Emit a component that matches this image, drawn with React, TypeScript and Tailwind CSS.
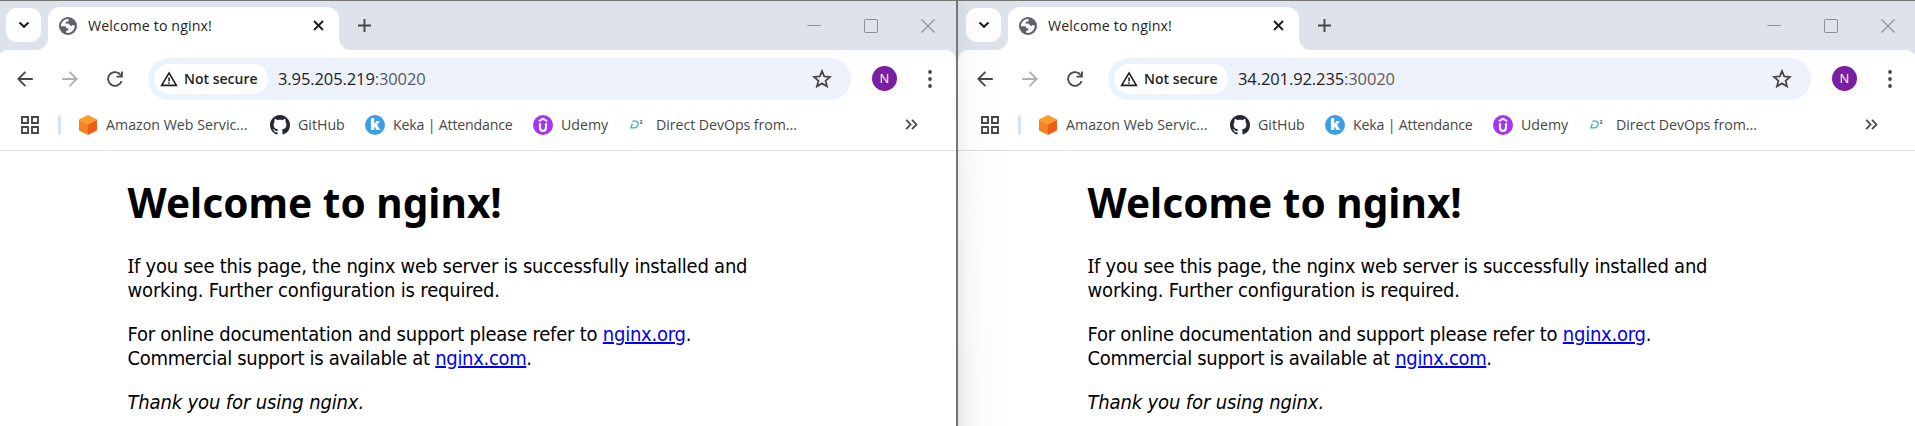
import type { ReactNode } from "react";

const UI = "font-['Open_Sans',sans-serif]";

function GlobeIcon() {
  return (
    <svg width="18" height="18" viewBox="0 0 18 18">
      <circle cx="9" cy="9" r="9" fill="#5f6368" />
      <path
        d="M2 9.2 C2 5.6 4.6 2.4 8.6 2 L9.8 2.6 L9.2 4.2 L6.8 5 L6.6 6.4 L8 6.8 L9.8 6.6 L11 8.4 L12.6 9 L13.4 8 L15.8 8.6 C15.9 12 13.4 15.4 9.6 16 L7 15.6 L7.2 14 L9.2 13.2 L9.4 11.6 L7.4 11 L6.4 9.2 Z"
        fill="#fff"
      />
    </svg>
  );
}

function AwsIcon() {
  return (
    <svg width="20" height="20" viewBox="0 0 20 20">
      <path d="M10 0 L19 4.6 L10 9.4 L1 4.6 Z" fill="#ff9a2b" />
      <path d="M1 4.6 L10 9.4 V20 L1 15.4 Z" fill="#f8811f" />
      <path d="M19 4.6 L10 9.4 V20 L19 15.4 Z" fill="#ec5d1e" />
    </svg>
  );
}

function GitHubIcon() {
  return (
    <svg width="20" height="20" viewBox="0 0 16 16" fill="#24292f">
      <path d="M8 0C3.58 0 0 3.58 0 8c0 3.54 2.29 6.53 5.47 7.59.4.07.55-.17.55-.38 0-.19-.01-.82-.01-1.49-2.01.37-2.53-.49-2.69-.94-.09-.23-.48-.94-.82-1.13-.28-.15-.68-.52-.01-.53.63-.01 1.08.58 1.23.82.72 1.21 1.87.87 2.33.66.07-.52.28-.87.51-1.07-1.78-.2-3.64-.89-3.64-3.95 0-.87.31-1.59.82-2.15-.08-.2-.36-1.02.08-2.12 0 0 .67-.21 2.2.82.64-.18 1.32-.27 2-.27s1.36.09 2 .27c1.53-1.04 2.2-.82 2.2-.82.44 1.1.16 1.92.08 2.12.51.56.82 1.27.82 2.15 0 3.07-1.87 3.75-3.65 3.95.29.25.54.73.54 1.48 0 1.07-.01 1.93-.01 2.2 0 .21.15.46.55.38A8.01 8.01 0 0 0 16 8c0-4.42-3.58-8-8-8z" />
    </svg>
  );
}

function KekaIcon() {
  return (
    <span className="flex size-5 items-center justify-center rounded-full bg-[#3b9fe6] pb-px font-['Open_Sans',sans-serif] text-[15px] leading-none font-extrabold text-white">
      k
    </span>
  );
}

function UdemyIcon() {
  return (
    <svg width="20" height="20" viewBox="0 0 20 20" fill="none" stroke="#fff">
      <circle cx="10" cy="10" r="10" fill="#a435f0" stroke="none" />
      <path d="M5.8 6.2 L10 3.6 L14.2 6.2" strokeWidth="1.9" />
      <path d="M7 8 V12.6 C7 17.2 13 17.2 13 12.6 V8" strokeWidth="2.1" />
    </svg>
  );
}

function DevOpsIcon() {
  return (
    <svg width="20" height="20" viewBox="0 0 20 20" fill="none">
      <path d="M4.4 6.2 H7.6 C12 6.4 10.4 12.8 5.6 12.8 H3 L4.3 8.6" stroke="#29abe2" strokeWidth="1.3" />
      <path d="M11.8 6 C12 5 14.2 5 14.1 6.2 C14 7 12.8 7.4 12 8.2 H14.6" stroke="#555" strokeWidth="0.9" />
    </svg>
  );
}

function Bookmark({ icon, children, textClass }: { icon: ReactNode; children: ReactNode; textClass: string }) {
  return (
    <div className="flex shrink-0 items-center gap-[8px]">
      {icon}
      <span className={`whitespace-nowrap text-[14.2px] leading-5 text-[#474747] ${textClass}`}>{children}</span>
    </div>
  );
}

function TabStrip() {
  return (
    <div className="flex h-[50px] items-start border-t border-[#757575] bg-[#dee2ea]">
      <div className="mt-[7px] ml-[8px] flex h-[34px] w-[35px] items-center justify-center rounded-[11px] bg-white">
        <svg width="12" height="8" viewBox="0 0 12 8" fill="none" stroke="#1f1f1f" strokeWidth="2.2">
          <path d="M1.5 1.5 L6 5.7 L10.5 1.5" />
        </svg>
      </div>
      <div className="-ml-[5px] h-3 w-3 self-end bg-[radial-gradient(circle_at_top_left,transparent_11.5px,white_12.5px)]" />
      <div className="mt-[6px] flex h-[43px] w-[291px] items-center rounded-t-[12px] bg-white pb-[6px] pl-[11px]">
        <GlobeIcon />
        <span className="ml-[11px] flex-1 whitespace-nowrap text-[14.2px] leading-5 tracking-[0.12px] text-[#1f1f1f]">
          Welcome to nginx!
        </span>
        <svg className="mr-[15px]" width="11" height="11" viewBox="0 0 11 11" stroke="#1f1f1f" strokeWidth="1.9">
          <path d="M1 1 L10 10 M10 1 L1 10" />
        </svg>
      </div>
      <div className="h-3 w-3 self-end bg-[radial-gradient(circle_at_top_right,transparent_11.5px,white_12.5px)]" />
      <svg className="mt-[18px] ml-[7px]" width="13" height="13" viewBox="0 0 13 13" stroke="#474747" strokeWidth="1.9">
        <path d="M6.5 0 V13 M0 6.5 H13" />
      </svg>
      <div className="mt-[18px] mr-[21px] ml-auto flex items-center gap-[43px]">
        <svg width="14" height="14" viewBox="0 0 14 14" stroke="#8c8f94">
          <path d="M0.5 6.5 H13.5" />
        </svg>
        <svg width="14" height="14" viewBox="0 0 14 14" fill="none" stroke="#8c8f94">
          <rect x="0.5" y="0.5" width="13" height="13" rx="0.8" />
        </svg>
        <svg width="14" height="14" viewBox="0 0 14 14" stroke="#8c8f94" strokeWidth="1.1">
          <path d="M0.5 0.5 L13.5 13.5 M13.5 0.5 L0.5 13.5" />
        </svg>
      </div>
    </div>
  );
}

function Toolbar({ host }: { host: string }) {
  return (
    <div className="flex h-[57px] items-center pl-[19px]">
      <svg width="16" height="16" viewBox="0 0 16 16" fill="none" stroke="#474747" strokeWidth="1.8">
        <path d="M15.8 8 H1.5 M8.4 0.8 L1.3 8 L8.4 15.2" />
      </svg>
      <svg className="ml-[29px]" width="16" height="16" viewBox="0 0 16 16" fill="none" stroke="#b0b0b0" strokeWidth="1.8">
        <path d="M0.2 8 H14.5 M7.6 0.8 L14.7 8 L7.6 15.2" />
      </svg>
      <svg className="ml-[29px]" width="16" height="16" viewBox="0 0 16 16" fill="none" stroke="#474747" strokeWidth="1.8">
        <path d="M13.8 4.2 A6.9 6.9 0 1 0 14.6 10 M14.9 0.6 V5.6 H9.6" />
      </svg>
      <div className="mt-px ml-[25px] flex h-[42px] w-[703px] items-center rounded-full bg-[#ecf1fa] pl-[6px]">
        <div className="flex h-[30px] w-[114px] items-center rounded-full bg-white pl-[6px]">
          <svg width="18" height="16" viewBox="0 0 18 16" fill="none" stroke="#1f1f1f" strokeWidth="1.6">
            <path d="M9 2 L16.4 14.4 H1.6 Z M9 6.6 V10.2 M9 11.2 V12.8" />
          </svg>
          <span className="ml-[6px] whitespace-nowrap text-[14px] leading-5 font-semibold text-[#1f1f1f]">Not secure</span>
        </div>
        <span className="ml-[10px] flex-1 whitespace-nowrap text-[16.5px] leading-5 tracking-[-0.1px] text-[#1f1f1f]">
          {host}
          <span className="text-[#5a5d61]">:30020</span>
        </span>
        <svg className="mr-[19px]" width="20" height="20" viewBox="0 0 20 20" fill="none" stroke="#474747" strokeWidth="1.8">
          <path d="M10 2.2 L12.2 7.4 L18 7.9 L13.6 11.7 L15 17.4 L10 14.4 L5 17.4 L6.4 11.7 L2 7.9 L7.8 7.4 Z" />
        </svg>
      </div>
      <div className="ml-[21px] flex size-[25px] items-center justify-center rounded-full bg-[#7b1fa2] text-[13px] leading-none text-white">
        N
      </div>
      <svg className="ml-[30.5px]" width="4" height="18" viewBox="0 0 4 18" fill="#474747">
        <circle cx="2" cy="2" r="1.9" />
        <circle cx="2" cy="9" r="1.9" />
        <circle cx="2" cy="16" r="1.9" />
      </svg>
    </div>
  );
}

function BookmarksBar() {
  return (
    <div className="flex h-[44px] items-center border-b border-[#dfdfdf] pb-[8px] pl-[23px]">
      <svg width="18" height="18" viewBox="0 0 18 18" fill="none" stroke="#474747" strokeWidth="1.9">
        <path d="M1 1 H7 V7 H1 Z M11 1 H17 V7 H11 Z M1 11 H7 V17 H1 Z M11 11 H17 V17 H11 Z" />
      </svg>
      <div className="mr-[17px] ml-[19px] h-5 w-[3px] rounded-full bg-[#d3e3fd]" />
      <div className="flex w-[192px]">
        <Bookmark icon={<AwsIcon />} textClass="tracking-[0.02px]">Amazon Web Servic...</Bookmark>
      </div>
      <div className="flex w-[95px]">
        <Bookmark icon={<GitHubIcon />} textClass="">GitHub</Bookmark>
      </div>
      <div className="flex w-[168px]">
        <Bookmark icon={<KekaIcon />} textClass="tracking-[-0.2px]">Keka | Attendance</Bookmark>
      </div>
      <div className="flex w-[95px]">
        <Bookmark icon={<UdemyIcon />} textClass="">Udemy</Bookmark>
      </div>
      <Bookmark icon={<DevOpsIcon />} textClass="tracking-[-0.06px]">Direct DevOps from...</Bookmark>
      <svg className="mr-[38px] ml-auto" width="13" height="11" viewBox="0 0 13 11" fill="none" stroke="#474747" strokeWidth="1.8">
        <path d="M1.2 0.8 L5.6 5.5 L1.2 10.2 M7 0.8 L11.4 5.5 L7 10.2" />
      </svg>
    </div>
  );
}

function NginxPage() {
  return (
    <main className="ml-[129.5px] w-[700px] font-['DejaVu_Sans_Condensed','DejaVu_Sans',sans-serif] text-[20px] leading-6 tracking-[-0.235px] whitespace-nowrap text-black [font-stretch:condensed]">
      <h1 className="pt-[28px] font-['Noto_Sans',sans-serif] text-[40.5px] leading-[48px] font-bold tracking-[0.04px]">
        Welcome to nginx!
      </h1>
      <p className="mt-[27px]">
        <span className="font-['Noto_Sans',sans-serif] leading-none">I</span>f you see this page, the nginx web server is
        successfully installed and
        <br />
        <span className="tracking-[-0.17px]">working. Further configuration is required.</span>
      </p>
      <p className="mt-5">
        For online documentation and support please refer to{" "}
        <a className="text-[#0000ee] underline">nginx.org</a>.
        <br />
        <span className="tracking-[-0.32px]">
          Commercial support is available at <a className="text-[#0000ee] underline">nginx.com</a>.
        </span>
      </p>
      <p className="mt-5 tracking-[-0.14px] italic">Thank you for using nginx.</p>
    </main>
  );
}

function BrowserWindow({ host, shaded }: { host: string; shaded?: boolean }) {
  return (
    <section className={`relative h-[426px] w-[958px] shrink-0 overflow-hidden bg-white ${UI}`}>
      <TabStrip />
      <div className="bg-[linear-gradient(#dee2ea_12px,white_12px)]">
        <div className="rounded-t-[10px] bg-white">
          <Toolbar host={host} />
          <BookmarksBar />
        </div>
      </div>
      <NginxPage />
      {shaded && (
        <div className="pointer-events-none absolute top-px bottom-0 left-0 w-[50px] bg-[linear-gradient(to_right,rgba(0,0,0,0.1),rgba(0,0,0,0.045)_20%,rgba(0,0,0,0.012)_50%,transparent)] [mask-image:linear-gradient(rgba(0,0,0,0.3),black)]" />
      )}
    </section>
  );
}

export default function App() {
  return (
    <div className="h-[426px] w-full overflow-hidden bg-white">
      <div className="-ml-[2px] flex">
        <BrowserWindow host="3.95.205.219" />
        <div className="w-[2px] shrink-0 bg-[#757575]" />
        <BrowserWindow host="34.201.92.235" shaded />
      </div>
    </div>
  );
}
